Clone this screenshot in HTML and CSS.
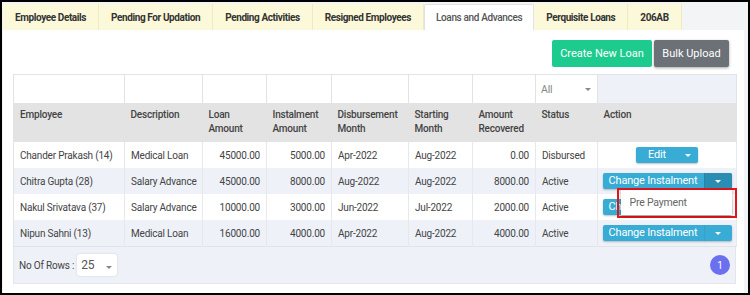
FILE: index.html
```html
<!DOCTYPE html>
<html lang="en">
<head>
    <meta charset="UTF-8">
    <meta name="viewport" content="width=device-width, initial-scale=1.0">
    <title>Loans and Advances</title>
    <link rel="stylesheet" href="styles.css">
</head>
<body>
    <div class="frame">
        <ul class="tabs">
            <li class="tab">Employee Details</li>
            <li class="tab">Pending For Updation</li>
            <li class="tab">Pending Activities</li>
            <li class="tab">Resigned Employees</li>
            <li class="tab active">Loans and Advances</li>
            <li class="tab">Perquisite Loans</li>
            <li class="tab">206AB</li>
        </ul>

        <div class="panel">
            <div class="toolbar">
                <button class="btn btn-green">Create New Loan</button>
                <button class="btn btn-gray">Bulk Upload</button>
            </div>

            <div class="grid">
                <table class="loans">
                    <colgroup>
                        <col class="c-emp">
                        <col class="c-desc">
                        <col class="c-loan">
                        <col class="c-inst">
                        <col class="c-disb">
                        <col class="c-start">
                        <col class="c-recv">
                        <col class="c-status">
                        <col class="c-action">
                    </colgroup>
                    <tr class="filters">
                        <td></td>
                        <td></td>
                        <td></td>
                        <td></td>
                        <td></td>
                        <td></td>
                        <td></td>
                        <td><div class="select-all">All <span class="caret grey"></span></div></td>
                        <td class="blank"></td>
                    </tr>
                    <tr class="head">
                        <th>Employee</th>
                        <th>Description</th>
                        <th>Loan Amount</th>
                        <th>Instalment Amount</th>
                        <th>Disbursement Month</th>
                        <th>Starting Month</th>
                        <th>Amount Recovered</th>
                        <th>Status</th>
                        <th>Action</th>
                    </tr>
                    <tr>
                        <td>Chander Prakash (14)</td>
                        <td>Medical Loan</td>
                        <td class="num">45000.00</td>
                        <td class="num">5000.00</td>
                        <td>Apr-2022</td>
                        <td>Aug-2022</td>
                        <td class="num">0.00</td>
                        <td>Disbursed</td>
                        <td class="action">
                            <div class="split split-edit">
                                <span class="split-main">Edit</span>
                                <span class="split-toggle"><span class="caret"></span></span>
                            </div>
                        </td>
                    </tr>
                    <tr class="alt">
                        <td>Chitra Gupta (28)</td>
                        <td>Salary Advance</td>
                        <td class="num">45000.00</td>
                        <td class="num">8000.00</td>
                        <td>Aug-2022</td>
                        <td>Aug-2022</td>
                        <td class="num">8000.00</td>
                        <td>Active</td>
                        <td class="action">
                            <div class="split open">
                                <span class="split-main">Change Instalment</span>
                                <span class="split-toggle"><span class="caret"></span></span>
                                <div class="callout">
                                    <div class="menu">Pre Payment</div>
                                </div>
                            </div>
                        </td>
                    </tr>
                    <tr>
                        <td>Nakul Srivatava (37)</td>
                        <td>Salary Advance</td>
                        <td class="num">10000.00</td>
                        <td class="num">3000.00</td>
                        <td>Jun-2022</td>
                        <td>Jul-2022</td>
                        <td class="num">2000.00</td>
                        <td>Active</td>
                        <td class="action">
                            <div class="split">
                                <span class="split-main">Change Instalment</span>
                                <span class="split-toggle"><span class="caret"></span></span>
                            </div>
                        </td>
                    </tr>
                    <tr class="alt">
                        <td>Nipun Sahni (13)</td>
                        <td>Medical Loan</td>
                        <td class="num">16000.00</td>
                        <td class="num">4000.00</td>
                        <td>Apr-2022</td>
                        <td>Aug-2022</td>
                        <td class="num">4000.00</td>
                        <td>Active</td>
                        <td class="action">
                            <div class="split">
                                <span class="split-main">Change Instalment</span>
                                <span class="split-toggle"><span class="caret"></span></span>
                            </div>
                        </td>
                    </tr>
                </table>

                <div class="grid-footer">
                    <div class="rows">
                        <span>No Of Rows :</span>
                        <div class="rows-select">25 <span class="caret grey"></span></div>
                    </div>
                    <span class="page">1</span>
                </div>
            </div>
        </div>
    </div>
</body>
</html>
```

FILE: styles.css
```css
body {
    margin: 0;
    font-family: Roboto, 'Liberation Sans', sans-serif;
    color: #444;
}

.frame {
    width: 750px;
    height: 295px;
    box-sizing: border-box;
    border: 2px solid #000;
    background: #f3f4f6;
    padding: 2px 4px 0 1px;
    display: flex;
    flex-direction: column;
}

/* Tabs */
.tabs {
    list-style: none;
    margin: 0;
    padding: 0;
    display: flex;
    height: 26px;
}

.tab {
    display: flex;
    align-items: center;
    padding: 0 12px;
    background: #fbf9d9;
    border-right: 1px solid #efebc0;
    font-size: 10px;
    font-weight: 700;
    letter-spacing: -0.4px;
    color: #333;
}

.tab.active {
    background: #fff;
    border: 1px solid #e2e2e2;
    border-bottom: none;
    border-radius: 2px 2px 0 0;
    padding: 0 11px;
    color: #555;
    font-weight: 500;
    letter-spacing: -0.35px;
}

/* Panel */
.panel {
    flex: 1;
    background: #fff;
    padding: 10px 8px 0 10px;
}

.toolbar {
    display: flex;
    justify-content: flex-end;
    gap: 2px;
    padding-right: 7px;
    margin-bottom: 7px;
}

.btn {
    height: 27px;
    border: none;
    border-radius: 2px;
    color: #fff;
    font-family: inherit;
    font-size: 11px;
    padding: 0;
}

.btn-green {
    width: 100px;
    background: #1ccb8d;
}

.btn-gray {
    width: 75px;
    background: #6b7177;
    box-shadow: 0 1px 3px rgba(0, 0, 0, 0.35);
}

/* Grid */
.grid {
    width: 723px;
}

.loans {
    width: 723px;
    table-layout: fixed;
    border-collapse: collapse;
    font-size: 10px;
    letter-spacing: -0.2px;
    border: 1px solid #e3e3e3;
}

.c-emp { width: 111px; }
.c-desc { width: 78px; }
.c-loan { width: 64px; }
.c-inst { width: 65px; }
.c-disb { width: 77px; }
.c-start { width: 64px; }
.c-recv { width: 63px; }
.c-status { width: 62px; }
.c-action { width: 139px; }

.loans td {
    height: 26px;
    padding: 0 6px;
    border-right: 1px solid #e6e8ec;
    color: #444;
    white-space: nowrap;
}

.loans tr.alt td {
    background: #eef2f8;
}

.filters td {
    height: 28px;
    background: #fff;
    border-right: 1px solid #e3e3e3;
    padding: 0;
}

.filters td.blank {
    background: #eef1f7;
}

.select-all {
    display: flex;
    justify-content: space-between;
    align-items: center;
    padding: 0 6px 0 5px;
    color: #888;
    font-size: 10.5px;
}

.head th {
    height: 39px;
    box-sizing: border-box;
    background: #e3e3e3;
    padding: 5px 6px 0;
    text-align: left;
    vertical-align: top;
    font-weight: 500;
    line-height: 14px;
    color: #444;
}

.loans td.num {
    text-align: right;
}

.loans td.action {
    text-align: center;
    padding: 0;
}

/* Split buttons */
.split {
    position: relative;
    display: inline-flex;
    height: 16px;
    vertical-align: middle;
    background: #38acd4;
    color: #fff;
    font-size: 11px;
    line-height: 16px;
    border-radius: 2px;
    box-shadow: 0 1px 2px rgba(0, 0, 0, 0.25);
}

.split-main {
    width: 101px;
    text-align: center;
}

.split-toggle {
    width: 27px;
    display: flex;
    justify-content: center;
    align-items: center;
    border-left: 1px solid rgba(0, 0, 0, 0.06);
}

.split-edit .split-main {
    width: 42px;
}

.split-edit .split-toggle {
    width: 20px;
    border-left: none;
}

.split.open .split-toggle {
    background: #2a8db2;
    border-radius: 0 2px 2px 0;
}

.caret {
    display: inline-block;
    width: 0;
    height: 0;
    border-left: 3px solid transparent;
    border-right: 3px solid transparent;
    border-top: 3px solid #fff;
}

.caret.grey {
    border-top-color: #888;
}

/* Opened dropdown with its highlight */
.callout {
    position: absolute;
    left: 14px;
    top: 15px;
    width: 120px;
    height: 30px;
    box-sizing: border-box;
    border: 2px solid #e3161b;
    z-index: 2;
}

.menu {
    width: 111px;
    height: 25px;
    margin-left: 2px;
    background: #fff;
    box-shadow: 0 1px 3px rgba(0, 0, 0, 0.3);
    color: #666;
    font-size: 10.5px;
    line-height: 25px;
    text-align: left;
    padding-left: 9px;
    box-sizing: border-box;
}

/* Footer */
.grid-footer {
    height: 37px;
    box-sizing: border-box;
    background: #eef1f8;
    border: 1px solid #e3e6ec;
    border-top: none;
    display: flex;
    justify-content: space-between;
    align-items: center;
    padding: 0 5px 0 5px;
    font-size: 10px;
    letter-spacing: -0.2px;
}

.rows {
    display: flex;
    align-items: center;
    gap: 3px;
}

.rows-select {
    width: 40px;
    height: 22px;
    box-sizing: border-box;
    background: #fff;
    border-radius: 3px;
    box-shadow: 0 0 2px rgba(0, 0, 0, 0.15);
    display: flex;
    justify-content: space-between;
    align-items: center;
    padding: 0 5px 0 4px;
    font-size: 12px;
    color: #555;
}

.rows-select .caret {
    margin-top: 4px;
}

.page {
    width: 20px;
    height: 20px;
    border-radius: 50%;
    background: #6b70ef;
    color: #fff;
    font-size: 10px;
    display: flex;
    justify-content: center;
    align-items: center;
}
```
